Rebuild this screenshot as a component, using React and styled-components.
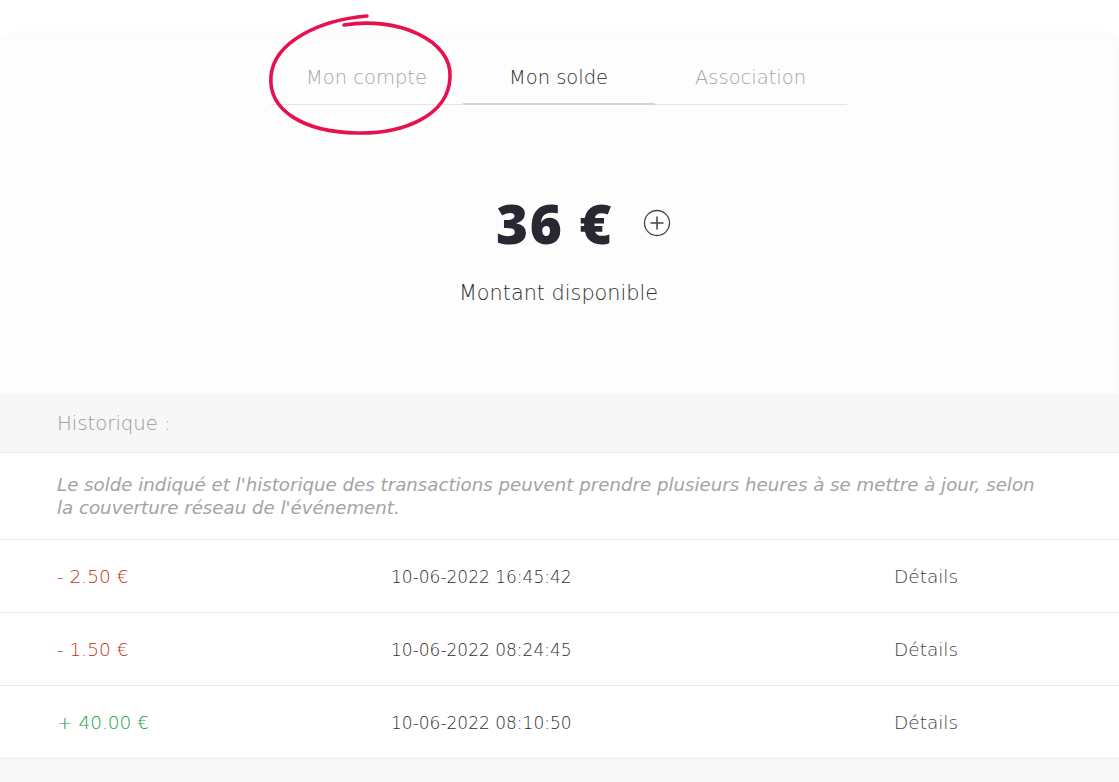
import React from "react";
import styled, { createGlobalStyle } from "styled-components";

const GlobalStyle = createGlobalStyle`
  body {
    margin: 0;
    background: #ffffff;
    font-family: "DejaVu Sans", "Open Sans", sans-serif;
  }
`;

const transactions = [
  { amount: "- 2.50 €", date: "10-06-2022 16:45:42", credit: false },
  { amount: "- 1.50 €", date: "10-06-2022 08:24:45", credit: false },
  { amount: "+ 40.00 €", date: "10-06-2022 08:10:50", credit: true },
];

const App = () => {
  return (
    <Page>
      <GlobalStyle />
      <Card>
        <TabsWrap>
          <Tabs>
            <Tab>Mon compte</Tab>
            <Tab active>Mon solde</Tab>
            <Tab>Association</Tab>
          </Tabs>
          <Scribble viewBox="0 0 200 140" aria-hidden="true">
            <path
              d="M 77 19 C 130 10, 186 34, 183 72 C 181 110, 136 128, 90 127 C 36 126, 1 104, 4 70 C 7 36, 52 14, 100 10"
              fill="none"
              stroke="#e5124f"
              strokeWidth="3.6"
              strokeLinecap="round"
            />
          </Scribble>
        </TabsWrap>
        <Balance>
          <Amount>36 €</Amount>
          <PlusIcon viewBox="0 0 28 28">
            <circle cx="14" cy="14" r="12.5" fill="none" stroke="#444" strokeWidth="1.3" />
            <path d="M14 7.5v13M7.5 14h13" stroke="#444" strokeWidth="1.5" />
          </PlusIcon>
        </Balance>
        <Caption>Montant disponible</Caption>
      </Card>
      <SectionHead>Historique :</SectionHead>
      <Note>
        Le solde indiqué et l'historique des transactions peuvent prendre plusieurs heures à se mettre à jour, selon
        la couverture réseau de l'événement.
      </Note>
      {transactions.map((t) => (
        <Row key={t.date}>
          <Money credit={t.credit}>{t.amount}</Money>
          <DateCell>{t.date}</DateCell>
          <Details>Détails</Details>
        </Row>
      ))}
      <Footer />
    </Page>
  );
};

export default App;

const Page = styled.div`
  width: 1119px;
  height: 782px;
  overflow: hidden;
  padding-top: 36px;
  box-sizing: border-box;
`;

const Card = styled.div`
  width: 1117px;
  height: 358px;
  background: #fdfdfd;
  border-radius: 12px 12px 0 0;
  box-shadow: 0 0 10px rgba(0, 0, 0, 0.05);
  display: flex;
  flex-direction: column;
  align-items: center;
  padding-top: 18px;
  box-sizing: border-box;
`;

const TabsWrap = styled.div`
  position: relative;
`;

const Tabs = styled.div`
  display: flex;
  border-bottom: 1px solid #e4e4e4;
`;

const Tab = styled.div`
  width: 192px;
  height: 51px;
  padding-bottom: 2px;
  box-sizing: border-box;
  display: flex;
  align-items: center;
  justify-content: center;
  font-size: 19.5px;
  font-weight: 300;
  color: ${(p) => (p.active ? "#2e2e2e" : "#a6a6a6")};
  border-bottom: 2px solid ${(p) => (p.active ? "#d2d2d2" : "transparent")};
  margin-bottom: -1px;
`;

const Scribble = styled.svg`
  position: absolute;
  left: -4px;
  top: -48px;
  width: 200px;
  height: 140px;
  overflow: visible;
`;

const Balance = styled.div`
  display: flex;
  align-items: center;
  margin-top: 88px;
  margin-left: 50px;
  gap: 30px;
`;

const Amount = styled.div`
  font-family: "Open Sans", sans-serif;
  font-size: 55px;
  font-weight: 800;
  color: #272832;
  line-height: 60px;
  letter-spacing: 1.5px;
`;

const PlusIcon = styled.svg`
  width: 28px;
  height: 28px;
`;

const Caption = styled.div`
  margin-top: 28px;
  font-size: 20.8px;
  font-weight: 300;
  color: #2f2f2f;
`;

const SectionHead = styled.div`
  height: 58px;
  background: #f7f7f7;
  border-bottom: 1px solid #ececec;
  display: flex;
  align-items: center;
  padding-left: 57px;
  font-size: 19.7px;
  font-weight: 300;
  color: #999999;
`;

const Note = styled.div`
  height: 87px;
  box-sizing: border-box;
  padding: 20px 80px 0 57px;
  font-size: 18.2px;
  line-height: 23px;
  font-style: italic;
  font-weight: 300;
  color: #a3a3a3;
  border-bottom: 1px solid #ebebeb;
  background: #fff;
`;

const Row = styled.div`
  height: 73px;
  box-sizing: border-box;
  border-bottom: 1px solid #ebebeb;
  display: grid;
  grid-template-columns: 334px 503px 1fr;
  align-items: center;
  padding-left: 57px;
  padding-top: 1px;
  font-size: 18.5px;
  font-weight: 300;
  background: #fff;
`;

const Money = styled.div`
  color: ${(p) => (p.credit ? "#16a23c" : "#bf3512")};
`;

const DateCell = styled.div`
  font-size: 17px;
  color: #2e2e2e;
`;

const Details = styled.div`
  color: #3e3e3e;
`;

const Footer = styled.div`
  height: 40px;
  background: #f8f8f9;
`;
